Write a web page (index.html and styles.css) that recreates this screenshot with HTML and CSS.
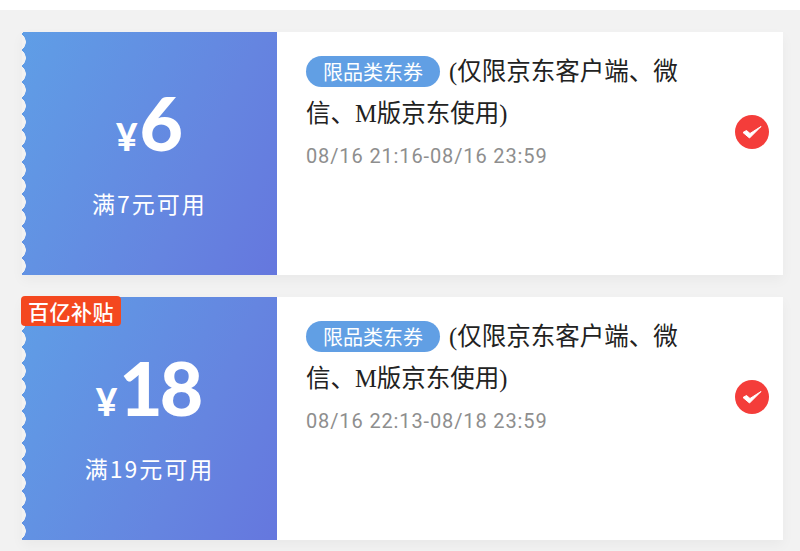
FILE: index.html
```html
<!DOCTYPE html>
<html lang="zh-CN">
<head>
  <meta charset="UTF-8">
  <title>优惠券</title>
  <link rel="stylesheet" href="styles.css">
</head>
<body>
  <div class="coupon-list">
    <div class="coupon">
      <div class="coupon-left">
        <div class="amount"><span class="yen">¥</span><span class="num">6</span></div>
        <div class="limit">满7元可用</div>
      </div>
      <div class="coupon-right">
        <div class="info">
          <div class="title"><span class="tag">限品类东券</span><span>(仅限京东客户端、微</span><br><span>信、M版京东使用)</span></div>
          <div class="date">08/16 21:16-08/16 23:59</div>
        </div>
        <svg class="check" viewBox="0 0 34 34"><circle cx="17" cy="17" r="17" fill="#f43d3a"/><path d="M8 17.500l6.500 5.500L26 11.500l-11 7-3.500-3z" fill="#fff" stroke="#fff" stroke-width="1" stroke-linejoin="round"/></svg>
      </div>
    </div>
    <div class="coupon">
      <div class="badge">百亿补贴</div>
      <div class="coupon-left">
        <div class="amount"><span class="yen">¥</span><span class="num">18</span></div>
        <div class="limit">满19元可用</div>
      </div>
      <div class="coupon-right">
        <div class="info">
          <div class="title"><span class="tag">限品类东券</span><span>(仅限京东客户端、微</span><br><span>信、M版京东使用)</span></div>
          <div class="date">08/16 22:13-08/18 23:59</div>
        </div>
        <svg class="check" viewBox="0 0 34 34"><circle cx="17" cy="17" r="17" fill="#f43d3a"/><path d="M8 17.500l6.500 5.500L26 11.500l-11 7-3.500-3z" fill="#fff" stroke="#fff" stroke-width="1" stroke-linejoin="round"/></svg>
      </div>
    </div>
  </div>
</body>
</html>
```
FILE: styles.css
```css
html, body {
  margin: 0;
  height: 100%;
  background-color: #fff;
}

body {
  overflow: hidden;
  font-family: "Liberation Serif", "Noto Sans CJK SC", serif;
}

.coupon-list {
  margin-top: 10px;
  padding: 22px 17px 11px 22px;
  background-color: #f2f2f2;
  display: flex;
  flex-direction: column;
  gap: 22px;
}

.coupon {
  position: relative;
  display: flex;
  height: 243px;
  background-color: #fff;
  box-shadow: 0 5px 12px rgba(0, 0, 0, 0.04);
}

/* left blue part */
.coupon-left {
  position: relative;
  width: 255px;
  flex-shrink: 0;
  display: flex;
  flex-direction: column;
  align-items: center;
  padding-top: 48px;
  box-sizing: border-box;
  color: #fff;
  background: linear-gradient(115deg, #5f9ee6 0%, #6585e0 65%, #6577de 100%);
  font-family: "Noto Sans CJK SC", sans-serif;
}

/* scalloped edge */
.coupon-left::before {
  content: "";
  position: absolute;
  left: 0;
  top: 0;
  bottom: 0;
  width: 4px;
  background: radial-gradient(circle 9.5px at -5.5px 50%, #f2f2f2 9px, transparent 9.5px) 0 2px / 4px 16px repeat-y;
}

.amount {
  display: flex;
  align-items: baseline;
  height: 90px;
  padding-right: 3px;
  line-height: 85px;
}

.yen {
  font-family: "Lato", sans-serif;
  font-size: 37px;
  font-weight: 900;
  margin-right: 2px;
}

.num {
  font-family: "Lato", sans-serif;
  font-size: 75px;
  font-weight: 900;
  letter-spacing: -3px;
}

.limit {
  margin-top: 17px;
  font-size: 23px;
  line-height: 32px;
  letter-spacing: 2px;
  font-weight: 400;
}

.badge {
  position: absolute;
  left: -1px;
  top: -1px;
  z-index: 2;
  width: 100px;
  height: 30px;
  line-height: 30px;
  text-align: center;
  background-color: #f4481f;
  border-radius: 4px;
  color: #fff;
  font-family: "Noto Sans CJK SC", sans-serif;
  font-size: 21px;
  font-weight: 500;
  letter-spacing: 0.500px;
}

/* right white part */
.coupon-right {
  flex: 1;
  display: flex;
  justify-content: space-between;
  padding: 19px 14px 0 29px;
}

.info {
  width: 380px;
}

.title {
  font-size: 24.500px;
  line-height: 42px;
  color: #222;
}

.tag {
  display: inline-block;
  width: 134px;
  height: 31px;
  line-height: 31px;
  margin-right: 9px;
  text-align: center;
  vertical-align: 0;
  border-radius: 16px;
  background-color: #619fe4;
  color: #fff;
  font-family: "Noto Sans CJK SC", sans-serif;
  font-size: 20px;
}

.date {
  margin-top: 8px;
  font-family: "Roboto", sans-serif;
  font-size: 20px;
  line-height: 26px;
  letter-spacing: 0.870px;
  color: #8e8e8e;
}

.check {
  width: 34px;
  height: 34px;
  flex-shrink: 0;
  margin-top: 64px;
}
```
